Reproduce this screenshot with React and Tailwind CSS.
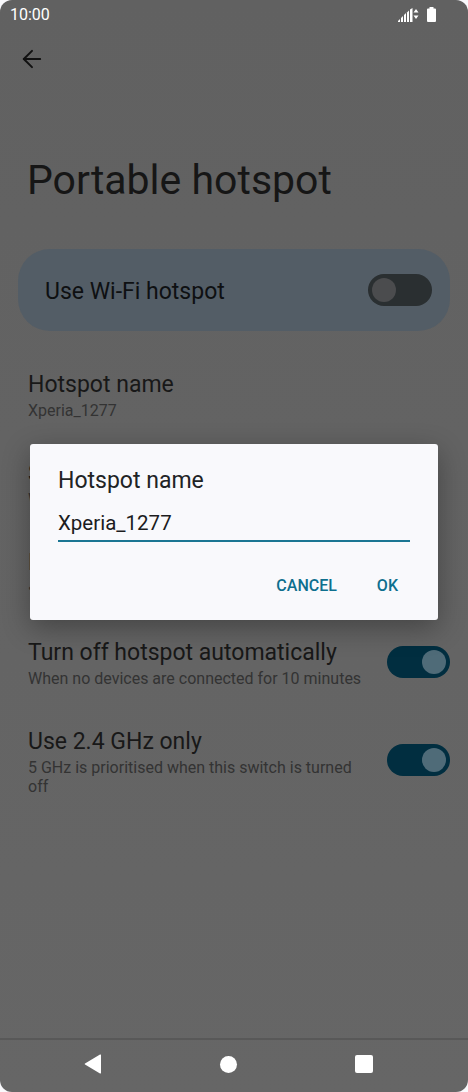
import { ArrowLeft } from 'lucide-react';

const font = { fontFamily: 'Roboto, sans-serif' };

function Toggle({ on }) {
  return (
    <div className={`flex items-center h-[32px] rounded-full px-[4px] shrink-0 ${on ? 'w-[63px] mb-[4px] justify-end bg-[#012e40]' : 'w-[64px] justify-start bg-[#2a2f31]'}`}>
      <div className={`w-[24px] h-[24px] rounded-full ${on ? 'bg-[#4f6b78]' : 'bg-[#4b4c4e]'}`} />
    </div>
  );
}

function Row({ title, sub, toggle }) {
  return (
    <div className="h-[89px] pl-[28px] pr-[18px]">
      <div className="flex items-center">
        <div className="flex-1 min-w-0 pr-[24px]">
          <div className="text-[23px] leading-[28px] text-[#181818]">{title}</div>
          <div className="text-[16px] leading-[19px] mt-[2px] text-[#333333]">{sub}</div>
        </div>
        {toggle && <Toggle on />}
      </div>
    </div>
  );
}

export default function App() {
  return (
    <div className="relative w-[468px] h-[1092px] overflow-hidden bg-[#f9f9fc]" style={font}>
      <div className="flex flex-col h-full rounded-[12px] bg-linear-to-b from-[#616161] to-[#666666] overflow-hidden">
        {/* Status bar */}
        <div className="flex items-center justify-between h-[28px] pl-[10px] pr-[32px] pt-[1px] text-white text-[16px] shrink-0">
          <span>10:00</span>
          <div className="flex items-center gap-[8px]">
            <svg width="21" height="14" viewBox="0 0 21 14" fill="#fff">
              <path d="M0 13l2-2v3H0z" />
              <path d="M3 10l2-2v6H3z" />
              <path d="M6 7l2-2v9H6z" />
              <path d="M9 4.500l2-2V14H9z" />
              <path d="M12 1.500L14.500 0v14H12z" />
              <path d="M18 1l2.500 3.500h-5zM15.500 7.500h5L18 11z" />
            </svg>
            <svg width="9" height="15" viewBox="0 0 9 15" fill="#fff">
              <path d="M2.500 0h4v1.500H8a1 1 0 0 1 1 1V14a1 1 0 0 1-1 1H1a1 1 0 0 1-1-1V2.500a1 1 0 0 1 1-1h1.500z" />
            </svg>
          </div>
        </div>

        {/* Toolbar */}
        <div className="flex items-center h-[62px] pl-[18px] shrink-0">
          <ArrowLeft size={28} color="#111" strokeWidth={1.7} />
        </div>

        {/* Title */}
        <div className="pl-[27px] pt-[64px] text-[41px] leading-[52px] text-[#161616] shrink-0">Portable hotspot</div>

        {/* Main switch card */}
        <div className="flex items-center justify-between mt-[43px] mx-[18px] h-[82px] rounded-[32px] bg-[#535d66] pl-[27px] pr-[18px] shrink-0">
          <span className="text-[23px] pt-[4px] text-[#0e1012]">Use Wi-Fi hotspot</span>
          <Toggle />
        </div>

        {/* Settings list */}
        <div className="flex flex-col pt-[40px] shrink-0">
          <Row title="Hotspot name" sub="Xperia_1277" />
          <Row title="Security" sub="WPA2-Personal" />
          <Row title="Hotspot password" sub="••••••••" />
          <div className="h-px" />
          <Row title="Turn off hotspot automatically" sub="When no devices are connected for 10 minutes" toggle />
          <Row title="Use 2.4 GHz only" sub="5 GHz is prioritised when this switch is turned off" toggle />
        </div>

        {/* Nav bar */}
        <div className="mt-auto flex items-center gap-[118px] h-[54px] pl-[84px] pb-[4px] border-t-2 border-[#585858] shrink-0">
          <svg width="18" height="20" viewBox="0 0 18 20" fill="#fff" className="shrink-0"><path d="M17 1v18a.6.6 0 0 1-1 .4L1 10.500a.6.6 0 0 1 0-1L16 .6a.6.6 0 0 1 1 .4z" /></svg>
          <div className="w-[17px] h-[17px] rounded-full bg-white shrink-0" />
          <div className="w-[18px] h-[18px] rounded-[2px] bg-white shrink-0" />
        </div>
      </div>

      {/* Dialog */}
      <div className="absolute left-[30px] top-[444px] w-[408px] h-[176px] rounded-[3px] bg-[#f9f9fc] shadow-[0_8px_28px_rgba(0,0,0,0.32)] px-[28px]">
        <div className="pt-[22px] text-[23px] leading-[29px] font-[450] text-[#212325]">Hotspot name</div>
        <div className="mt-[14px] text-[20.500px] leading-[28px] text-[#1c1c1e] border-b-2 border-[#1b7693] w-[352px] h-[33px]">Xperia_1277</div>
        <div className="flex justify-end gap-[40px] pr-[12px] pt-[34px] text-[16px] leading-[20px] font-medium text-[#0e6f8e]">
          <span>CANCEL</span>
          <span>OK</span>
        </div>
      </div>
    </div>
  );
}
